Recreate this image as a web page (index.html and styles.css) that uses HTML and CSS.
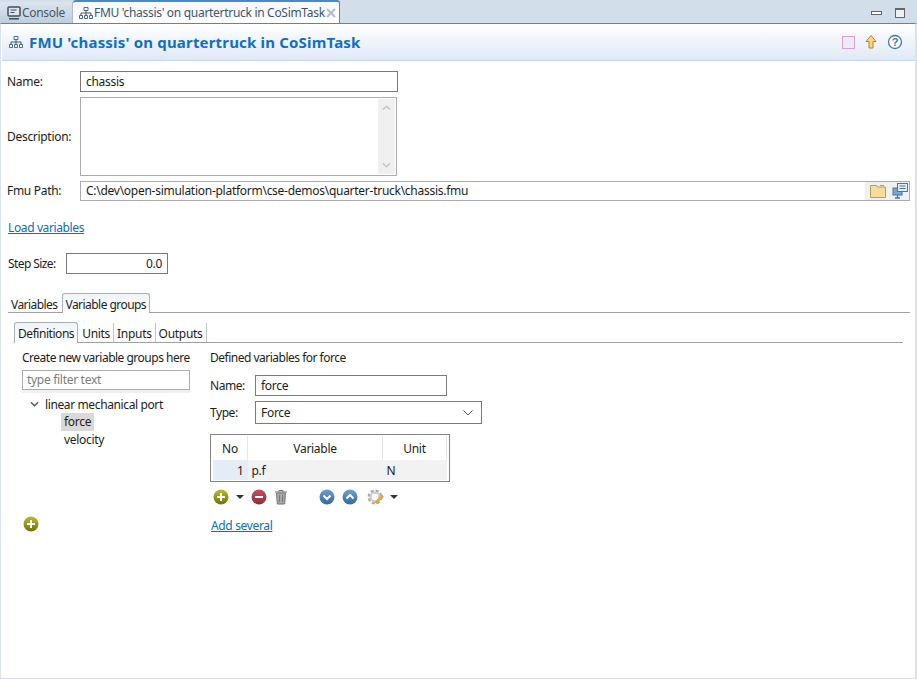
FILE: index.html
```html
<!DOCTYPE html>
<html lang="en">
<head>
  <meta charset="UTF-8">
  <title>FMU 'chassis' on quartertruck in CoSimTask</title>
  <link rel="stylesheet" href="styles.css">
</head>
<body>
  <svg class="defs" width="0" height="0">
    <defs>
      <linearGradient id="gOlive" x1="0" y1="0" x2="0" y2="1"><stop offset="0" stop-color="#b9bd2c"/><stop offset="1" stop-color="#6f7410"/></linearGradient>
      <linearGradient id="gRed" x1="0" y1="0" x2="0" y2="1"><stop offset="0" stop-color="#c8505f"/><stop offset="1" stop-color="#8f2a3c"/></linearGradient>
      <linearGradient id="gBlue" x1="0" y1="0" x2="0" y2="1"><stop offset="0" stop-color="#6d9fd3"/><stop offset="1" stop-color="#35689f"/></linearGradient>
      <symbol id="tree" viewBox="0 0 14 14">
        <path d="M5 1.500h4v3H5zM.5 9.500h3v3h-3zM5.500 9.500h3v3h-3zM10.500 9.500h3v3h-3z" fill="#fff" stroke="#3d6f9e"/>
        <path d="M7 4.500v5M2 9.500V7h10v2.500" fill="none" stroke="#44546a"/>
      </symbol>
      <symbol id="plus" viewBox="0 0 16 16">
        <circle cx="8" cy="8" r="7.500" fill="url(#gOlive)"/>
        <path d="M8 4v8M4 8h8" stroke="#fff" stroke-width="2"/>
      </symbol>
    </defs>
  </svg>

  <div class="tabbar">
    <div class="view-tab">
      <svg class="ico-console" viewBox="0 0 14 14"><rect x="1" y="1" width="12" height="9" rx="1" fill="#dfe6ee" stroke="#3f4d5c" stroke-width="1.500"/><path d="M3.500 4h6M3.500 6.500h4" stroke="#3f4d5c"/><path d="M2 12.800h10" stroke="#3f4d5c" stroke-width="1.500"/></svg>
      <span>Console</span>
    </div>
    <div class="view-tab active">
      <svg class="ico14"><use href="#tree"/></svg>
      <span>FMU 'chassis' on quartertruck in CoSimTask</span>
      <svg class="close" viewBox="0 0 10 10"><path d="M1 1l8 8M9 1l-8 8" stroke="#b3bcc6" stroke-width="2"/></svg>
    </div>
    <div class="win-btns">
      <span class="win-min"></span>
      <span class="win-max"></span>
    </div>
  </div>

  <div class="editor">
    <div class="form-head">
      <svg class="ico14"><use href="#tree"/></svg>
      <h1>FMU 'chassis' on quartertruck in CoSimTask</h1>
      <div class="head-actions">
        <span class="pink-box"></span>
        <svg class="ico16" viewBox="0 0 16 16"><path d="M8 1.500L13 7.500H10V14H6V7.500H3z" fill="#fbd67c" stroke="#b8842c"/></svg>
        <svg class="ico16" viewBox="0 0 16 16"><circle cx="8" cy="8" r="6.500" fill="#fff" stroke="#3f77ad" stroke-width="1.300"/><text x="8" y="11.700" class="help-q">?</text></svg>
      </div>
    </div>

    <div class="form-body">
      <div class="row row-name">
        <label class="lbl">Name:</label>
        <div class="field name-field">chassis</div>
      </div>
      <div class="row row-desc">
        <label class="lbl">Description:</label>
        <div class="desc-field">
          <div class="scroll">
            <svg viewBox="0 0 10 6"><path d="M1 5l4-4 4 4" fill="none" stroke="#c4c4c4" stroke-width="1.600"/></svg>
            <svg viewBox="0 0 10 6"><path d="M1 1l4 4 4-4" fill="none" stroke="#c4c4c4" stroke-width="1.600"/></svg>
          </div>
        </div>
      </div>
      <div class="row row-path">
        <label class="lbl">Fmu Path:</label>
        <div class="field path-field">
          <span class="path-text">C:\dev\open-simulation-platform\cse-demos\quarter-truck\chassis.fmu</span>
          <span class="path-btns">
            <svg class="ico16" viewBox="0 0 16 16"><path d="M.5 14.500V2.500h6l1 1.500h8v10.500z" fill="#f7dc9a" stroke="#bd9a55"/><path d="M10 2.500h4" fill="none" stroke="#6fb4c4"/></svg>
            <svg class="ico16" viewBox="0 0 16 16"><rect x="1" y="5" width="9" height="7" fill="#7ba6d0" stroke="#3f77ad"/><path d="M5.500 12v2.500M3 15h5" stroke="#3f77ad" stroke-width="1.300"/><rect x="5.500" y=".5" width="10" height="8" fill="#e4eff9" stroke="#3f77ad"/><path d="M7.500 3h6M7.500 5.500h6" stroke="#3f77ad"/></svg>
          </span>
        </div>
      </div>

      <a class="link load-link" href="#">Load variables</a>

      <div class="row row-step">
        <label>Step Size:</label>
        <div class="field step-field">0.0</div>
      </div>

      <div class="tabs outer-tabs">
        <span class="tab">Variables</span>
        <span class="tab on">Variable groups</span>
      </div>

      <div class="tabs inner-tabs">
        <span class="tab on">Definitions</span>
        <span class="tab sep">Units</span>
        <span class="tab sep">Inputs</span>
        <span class="tab sep">Outputs</span>
      </div>

      <div class="defs-panel">
        <div class="left-col">
          <div class="hint">Create new variable groups here</div>
          <div class="filter">type filter text</div>
          <div class="tree">
            <div class="node">
              <svg class="twisty" viewBox="0 0 10 6"><path d="M1 1l4 4 4-4" fill="none" stroke="#555" stroke-width="1.500"/></svg>
              <span>linear mechanical port</span>
            </div>
            <div class="leaf"><span class="sel">force</span></div>
            <div class="leaf"><span>velocity</span></div>
          </div>
          <svg class="add-group"><use href="#plus"/></svg>
        </div>

        <div class="right-col">
          <div class="hint">Defined variables for force</div>
          <div class="row row-var">
            <label>Name:</label>
            <div class="field var-name">force</div>
          </div>
          <div class="row row-type">
            <label>Type:</label>
            <div class="field var-type">
              <span>Force</span>
              <svg viewBox="0 0 10 6"><path d="M.5 .5L5 5 9.500 .5" fill="none" stroke="#555"/></svg>
            </div>
          </div>

          <div class="table-wrap">
            <table class="var-table">
              <thead><tr><th class="c-no">No</th><th class="c-var">Variable</th><th class="c-unit">Unit</th></tr></thead>
              <tbody><tr><td class="c-no">1</td><td class="c-var">p.f</td><td class="c-unit">N</td></tr></tbody>
            </table>
          </div>

          <div class="toolbar">
            <svg class="ico16"><use href="#plus"/></svg>
            <span class="caret"></span>
            <svg class="ico16 t-minus" viewBox="0 0 16 16"><circle cx="8" cy="8" r="7.500" fill="url(#gRed)"/><path d="M4 8h8" stroke="#fff" stroke-width="2"/></svg>
            <svg class="ico16 t-trash" viewBox="0 0 16 16"><path d="M2 3h12M6 3V1.500h4V3" fill="none" stroke="#777"/><path d="M3.500 4h9l-.8 11H4.300z" fill="#aaa" stroke="#777"/><path d="M6.500 6v7M9.500 6v7" stroke="#777"/></svg>
            <svg class="ico16 t-down" viewBox="0 0 16 16"><circle cx="8" cy="8" r="7.500" fill="url(#gBlue)"/><path d="M4.500 6.500L8 10l3.500-3.500" fill="none" stroke="#fff" stroke-width="2"/></svg>
            <svg class="ico16 t-up" viewBox="0 0 16 16"><circle cx="8" cy="8" r="7.500" fill="url(#gBlue)"/><path d="M4.500 9.500L8 6l3.500 3.500" fill="none" stroke="#fff" stroke-width="2"/></svg>
            <svg class="t-gear" viewBox="0 0 18 18"><circle cx="8" cy="9" r="5.500" fill="none" stroke="#a8a8a8" stroke-width="4" stroke-dasharray="2.600 1.700"/><circle cx="8" cy="9" r="4.500" fill="none" stroke="#cfcfcf" stroke-width="2.200"/><path d="M8.500 15L16 7.500" stroke="#e3a83c" stroke-width="2.800"/></svg>
            <span class="caret caret-gear"></span>
          </div>

          <a class="link add-link" href="#">Add several</a>
        </div>
      </div>
    </div>
  </div>
</body>
</html>
```

FILE: styles.css
```css
html, body {
  height: 100%;
}
body {
  margin: 0;
  font-family: "Noto Sans", "Open Sans", Arial, sans-serif;
  font-size: 12px;
  letter-spacing: -0.3px;
  color: #1c1c1c;
  background: #d2dee9;
  display: flex;
  flex-direction: column;
  overflow: hidden;
}
.defs {
  position: absolute;
}
.ico16 {
  width: 16px;
  height: 16px;
  flex: none;
}
.ico14 {
  width: 14px;
  height: 14px;
  flex: none;
}
.ico-console {
  width: 14px;
  height: 14px;
  flex: none;
}

/* view tabs */
.tabbar {
  height: 23px;
  flex: none;
  display: flex;
  align-items: flex-end;
  padding-right: 12px;
  background: #d2dee9;
}
.view-tab {
  box-sizing: border-box;
  height: 21px;
  width: 73px;
  flex: none;
  display: flex;
  align-items: center;
  gap: 1px;
  padding: 0 0 0 7px;
  white-space: nowrap;
  color: #4a5560;
  background: linear-gradient(#dbe5ef, #bfcedd);
  border-right: 1px solid #aebccb;
}
.view-tab.active {
  height: 23px;
  width: 267px;
  padding: 0 4px 0 6px;
  color: #3e5570;
  background: linear-gradient(#f4f7fb, #fff);
  border-top: 2px solid #4a8ac0;
  border-right: 1px solid #4a8ac0;
  border-radius: 3px 3px 0 0;
}
.close {
  width: 10px;
  height: 10px;
  margin-left: auto;
  flex: none;
}
.win-btns {
  margin-left: auto;
  display: flex;
  gap: 13px;
  align-items: flex-start;
  padding-bottom: 5px;
}
.win-min {
  width: 9px;
  height: 2px;
  border: 1px solid #666;
  background: #fff;
  margin-top: 3px;
}
.win-max {
  width: 8px;
  height: 7px;
  border: 1px solid #666;
  border-top-width: 2px;
  background: #eef2f6;
}

/* editor */
.editor {
  flex: 1;
  display: flex;
  flex-direction: column;
  background: #fff;
  border-top: 1px solid #4a8ac0;
  border-left: 1px solid #d9e3ee;
  border-right: 2px solid #d9e3ee;
  border-bottom: 1px solid #d3deec;
  border-radius: 0 0 0 3px;
}
.form-head {
  height: 36px;
  flex: none;
  margin-left: 1px;
  display: flex;
  align-items: center;
  gap: 6px;
  padding: 0 12px 0 7px;
  background: linear-gradient(#fff, #dfe9f5);
  border-bottom: 1px solid #c5d6e8;
}
.form-head h1 {
  margin: 0;
  font-size: 15px;
  font-weight: 700;
  letter-spacing: 0.18px;
  color: #0f6fc6;
}
.head-actions {
  margin-left: auto;
  display: flex;
  align-items: center;
  gap: 8px;
}
.pink-box {
  width: 11px;
  height: 11px;
  border: 1px solid #d3a2d3;
  background: #f1e9f5;
}
.help-q {
  font: 700 11px "Liberation Sans", sans-serif;
  letter-spacing: 0;
  text-anchor: middle;
  fill: #3f77ad;
}
.form-body {
  padding: 10px 5px 0 6px;
}

/* rows and fields */
.row {
  display: flex;
  align-items: center;
}
.lbl {
  width: 73px;
  flex: none;
}
.field {
  box-sizing: border-box;
  display: flex;
  align-items: center;
  background: #fff;
  border: 1px solid #7a7a7a;
  padding: 0 5px;
}
.name-field {
  width: 318px;
  height: 21px;
}
.row-desc {
  margin-top: 5px;
}
.desc-field {
  box-sizing: border-box;
  width: 317px;
  height: 79px;
  border: 1px solid #acacac;
  display: flex;
  justify-content: flex-end;
}
.scroll {
  width: 17px;
  margin: 1px;
  background: #f0f0f0;
  display: flex;
  flex-direction: column;
  justify-content: space-between;
  align-items: center;
  padding: 6px 0;
}
.scroll svg {
  width: 9px;
  height: 6px;
}
.row-path {
  margin-top: 5px;
}
.row-path .lbl, .path-text {
  position: relative;
  top: -1px;
}
.path-field {
  flex: 1;
  height: 20px;
  border-color: #acacac;
  padding-right: 0;
}
.path-text {
  flex: 1;
  letter-spacing: -0.27px;
}
.path-btns {
  height: 18px;
  display: flex;
  align-items: center;
  gap: 6px;
  padding: 0 1px 0 5px;
  background: #f0f0f0;
}
.link {
  color: #0a6cce;
  text-decoration: underline;
}
.load-link {
  display: block;
  margin: 18px 0 0 1px;
  width: max-content;
  letter-spacing: -0.38px;
}
.row-step {
  margin-top: 17px;
}
.row-step label {
  width: 59px;
  padding-left: 1px;
  box-sizing: border-box;
  letter-spacing: -0.6px;
}
.step-field {
  width: 102px;
  height: 21px;
  justify-content: flex-end;
  border-color: #7a7a7a;
}

/* tabs */
.tabs {
  display: flex;
  align-items: flex-end;
  border-bottom: 1px solid #a0a0a0;
}
.tab {
  padding: 0 4px;
  height: 18px;
  line-height: 18px;
  position: relative;
}
.tab.on {
  background: linear-gradient(#f0f4f8, #fff);
  border: 1px solid #a8b0b8;
  border-bottom: 0;
  border-radius: 3px 3px 0 0;
  padding: 0 3px;
}
.tab.on::after {
  content: "";
  position: absolute;
  left: 0;
  right: 0;
  bottom: -1px;
  height: 1px;
  background: #fff;
}
.outer-tabs {
  margin: 19px 0 0 1px;
  height: 19px;
  letter-spacing: -0.55px;
}
.outer-tabs .tab {
  padding-top: 1px;
  height: 17px;
  line-height: 19px;
}
.outer-tabs .tab:first-child {
  padding: 1px 4px 0 3px;
}
.inner-tabs {
  margin: 9px 7px 0 7px;
  height: 20px;
}
.inner-tabs .tab {
  height: 19px;
  line-height: 21px;
}
.inner-tabs .tab.on {
  letter-spacing: -0.45px;
}
.tab.sep {
  border-right: 1px solid #c4c4c4;
  padding: 0 3px 0 3px;
}
.tab.on + .tab.sep {
  padding-left: 4px;
}

/* definitions panel */
.defs-panel {
  display: flex;
  gap: 20px;
  padding: 7px 0 0 15px;
}
.left-col {
  width: 168px;
  flex: none;
}
.hint {
  height: 16px;
  line-height: 16px;
  white-space: nowrap;
  letter-spacing: -0.5px;
}
.filter {
  box-sizing: border-box;
  height: 20px;
  line-height: 18px;
  margin-top: 4px;
  padding-left: 4px;
  border: 1px solid #acacac;
  color: #7c7c7c;
}
.tree {
  padding-top: 5px;
  background: linear-gradient(#f0f0f0 3px, transparent 3px);
}
.node {
  display: flex;
  align-items: center;
  height: 18px;
  padding-left: 8px;
  gap: 6px;
  letter-spacing: -0.38px;
}
.twisty {
  width: 9px;
  height: 6px;
}
.leaf {
  height: 18px;
  line-height: 18px;
  padding-left: 42px;
}
.sel {
  display: inline-block;
  padding: 0 3px;
  margin-left: -3px;
  background: #d9d9d9;
}
.add-group {
  display: block;
  width: 16px;
  height: 16px;
  margin: 67px 0 0 1px;
}
.right-col {
  flex: 1;
}
.row-var {
  margin-top: 9px;
}
.row-var label, .row-type label {
  width: 45px;
  box-sizing: border-box;
  letter-spacing: -0.45px;
}
.var-name {
  width: 192px;
  height: 21px;
}
.row-type {
  margin-top: 5px;
}
.var-type {
  width: 227px;
  height: 23px;
  justify-content: space-between;
}
.var-type svg {
  width: 10px;
  height: 6px;
  margin-right: 3px;
}

/* variable table */
.table-wrap {
  box-sizing: border-box;
  width: 240px;
  height: 48px;
  margin-top: 10px;
  border: 1px solid #84848c;
  padding: 1px 2px;
}
.var-table {
  width: 100%;
  border-collapse: collapse;
  table-layout: fixed;
}
.var-table th {
  height: 24px;
  padding: 0;
  font-weight: 400;
  border-right: 1px solid #e5e5e5;
}
.var-table td {
  height: 20px;
  padding: 0 0 0 4px;
  background: #f2f2f2;
}
.var-table .c-no {
  width: 34px;
}
.var-table .c-unit {
  width: 63px;
}
.var-table td.c-no {
  text-align: right;
  padding: 0 4px 0 0;
  background: #e3ecf7;
}

/* toolbar */
.toolbar {
  display: flex;
  align-items: center;
  height: 16px;
  margin: 7px 0 0 3px;
}
.caret {
  width: 0;
  height: 0;
  margin-left: 7px;
  border: 4px solid transparent;
  border-top-color: #333;
  border-bottom: 0;
}
.caret-gear {
  margin-left: 5px;
}
.t-minus {
  margin-left: 7px;
}
.t-trash {
  margin-left: 6px;
}
.t-down {
  margin-left: 30px;
}
.t-up {
  margin-left: 7px;
}
.t-gear {
  width: 18px;
  height: 18px;
  flex: none;
  margin-left: 9px;
}
.add-link {
  display: block;
  width: max-content;
  margin: 12px 0 0 1px;
  letter-spacing: -0.35px;
}
```
